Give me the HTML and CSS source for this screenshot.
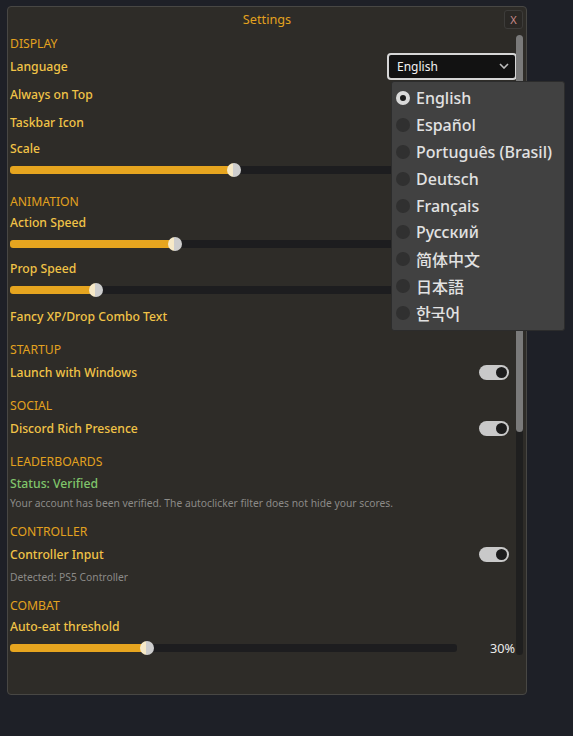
FILE: index.html
```html
<!doctype html>
<html lang="en">
<head>
  <meta charset="UTF-8">
  <title>Settings</title>
  <link rel="stylesheet" href="styles.css">
</head>
<body>
  <div class="window">
    <div class="titlebar">
      <span class="title">Settings</span>
      <div class="close">X</div>
    </div>

    <div class="panel">
      <div class="scroll">
        <section class="group">
          <div class="head">Display</div>
          <div class="opt">
            <span>Language</span>
            <div class="select">
              <span>English</span>
              <svg width="10" height="6" viewBox="0 0 10 6"><path d="M1 1l4 4 4-4" fill="none" stroke="#bdbdbd" stroke-width="1.6"/></svg>
            </div>
          </div>
          <div class="opt"><span>Always on Top</span><div class="toggle"></div></div>
          <div class="opt"><span>Taskbar Icon</span><div class="toggle"></div></div>
          <div class="label">Scale</div>
          <div class="slider">
            <div class="track"><div class="fill" style="width:50.1%"></div><div class="grab" style="left:50.1%"></div></div>
            <span class="value"></span>
          </div>
        </section>

        <section class="group">
          <div class="head">Animation</div>
          <div class="label">Action Speed</div>
          <div class="slider">
            <div class="track"><div class="fill" style="width:36.9%"></div><div class="grab" style="left:36.9%"></div></div>
            <span class="value"></span>
          </div>
          <div class="label">Prop Speed</div>
          <div class="slider">
            <div class="track"><div class="fill" style="width:19.2%"></div><div class="grab" style="left:19.2%"></div></div>
            <span class="value"></span>
          </div>
          <div class="opt"><span>Fancy XP/Drop Combo Text</span><div class="toggle"></div></div>
        </section>

        <section class="group">
          <div class="head">Startup</div>
          <div class="opt"><span>Launch with Windows</span><div class="toggle"></div></div>
        </section>

        <section class="group">
          <div class="head">Social</div>
          <div class="opt"><span>Discord Rich Presence</span><div class="toggle"></div></div>
        </section>

        <section class="group">
          <div class="head">Leaderboards</div>
          <div class="status">Status: Verified</div>
          <div class="note">Your account has been verified. The autoclicker filter does not hide your scores.</div>
        </section>

        <section class="group">
          <div class="head">Controller</div>
          <div class="opt"><span>Controller Input</span><div class="toggle"></div></div>
          <div class="note">Detected: PS5 Controller</div>
        </section>

        <section class="group">
          <div class="head">Combat</div>
          <div class="label">Auto-eat threshold</div>
          <div class="slider">
            <div class="track"><div class="fill" style="width:30.6%"></div><div class="grab" style="left:30.6%"></div></div>
            <span class="value">30%</span>
          </div>
        </section>
      </div>

      <div class="scrollbar"><div class="thumb"></div></div>
    </div>
  </div>

  <!-- language dropdown list, open -->
  <div class="popup">
    <div class="item"><i class="radio checked"></i>English</div>
    <div class="item"><i class="radio"></i>Español</div>
    <div class="item"><i class="radio"></i>Português (Brasil)</div>
    <div class="item"><i class="radio"></i>Deutsch</div>
    <div class="item"><i class="radio"></i>Français</div>
    <div class="item"><i class="radio"></i>Русский</div>
    <div class="item" lang="zh-CN"><i class="radio"></i>简体中文</div>
    <div class="item" lang="ja"><i class="radio"></i>日本語</div>
    <div class="item" lang="ko"><i class="radio"></i>한국어</div>
  </div>
</body>
</html>
```

FILE: styles.css
```css
:root {
  --page: #1e2027;
  --panel: #2e2c28;
  --orange: #e3a21f;
  --yellow: #f1c347;
  --muted: #8b8a87;
  --green: #80c56b;
  --fill: #e6a51f;
  --track: #1d1d1f;
}

* {
  box-sizing: border-box;
}

body {
  margin: 0;
  padding: 6px 0 0 7px;
  height: 736px;
  overflow: hidden;
  position: relative;
  background: var(--page);
  font-family: "Noto Sans", "Noto Sans CJK SC", sans-serif;
  font-size: 12.2px;
  font-weight: 500;
}

.window {
  width: 520px;
  height: 689px;
  background: var(--panel);
  border: 1px solid #484744;
  border-radius: 4px;
  display: flex;
  flex-direction: column;
}

.titlebar {
  height: 27px;
  padding-bottom: 3px;
  display: grid;
  grid-template-columns: 1fr auto 1fr;
  align-items: center;
}

.title {
  grid-column: 2;
  color: var(--orange);
  font-size: 12.7px;
  font-weight: 400;
}

.close {
  grid-column: 3;
  justify-self: end;
  width: 19px;
  height: 19px;
  margin-right: 3px;
  border: 1px solid #3d3c3a;
  border-radius: 3px;
  background: #2a2825;
  color: #c98b8b;
  font-size: 11px;
  font-weight: 400;
  display: flex;
  align-items: center;
  justify-content: center;
}

.panel {
  display: flex;
  height: 626px;
}

.scroll {
  flex: 1;
  padding-left: 2px;
  overflow: hidden;
}

.scrollbar {
  width: 7px;
  height: 620px;
  margin: 1px 3px 0 0;
  background: #1f1f1f;
  border-radius: 4px;
}

.thumb {
  height: 397px;
  background: #7a7a7a;
  border-radius: 4px;
}

.group + .group {
  margin-top: 10px;
}

.head {
  height: 18px;
  padding-top: 1px;
  line-height: 18px;
  color: var(--orange);
  font-weight: 400;
  text-transform: uppercase;
}

.opt {
  height: 28px;
  display: flex;
  align-items: center;
  justify-content: space-between;
  color: var(--yellow);
}

.label {
  height: 22px;
  padding-top: 2px;
  line-height: 22px;
  color: var(--yellow);
}

.status {
  height: 24px;
  padding-top: 2px;
  line-height: 24px;
  color: var(--green);
}

.note {
  height: 18px;
  line-height: 18px;
  font-size: 10.3px;
  font-weight: 400;
  color: var(--muted);
}

/* on/off switch */
.toggle {
  position: relative;
  width: 30px;
  height: 15px;
  margin-right: 7px;
  border-radius: 8px;
  background: #c9c9c9;
}

.toggle::after {
  content: "";
  position: absolute;
  right: 2px;
  top: 2px;
  width: 11px;
  height: 11px;
  border-radius: 50%;
  background: #1c1c1c;
}

/* sliders */
.slider {
  height: 24px;
  display: flex;
  align-items: center;
}

.track {
  position: relative;
  width: 447px;
  height: 8px;
  border-radius: 3px;
  background: var(--track);
}

.fill {
  height: 100%;
  border-radius: 3px 0 0 3px;
  background: var(--fill);
}

.grab {
  position: absolute;
  top: 50%;
  width: 14px;
  height: 14px;
  border-radius: 50%;
  transform: translate(-50%, -50%);
  background: linear-gradient(90deg, #f6e9c7 0 45%, #cdcdcd 45%);
}

.value {
  flex: 1;
  text-align: right;
  padding-right: 1px;
  font-size: 12.7px;
  font-weight: 400;
  color: #ebebeb;
}

/* language select */
.select {
  width: 130px;
  height: 27px;
  margin-right: -1px;
  padding: 0 6px 0 8px;
  border: 2px solid #d6d6d6;
  border-radius: 4px;
  background: #121212;
  color: #f2f2f2;
  font-size: 12px;
  font-weight: 400;
  display: flex;
  align-items: center;
  justify-content: space-between;
}

.popup {
  position: absolute;
  left: 391px;
  top: 81px;
  width: 174px;
  padding: 3px 0 4px 4px;
  background: #414141;
  border: 1px solid #2c2c2c;
  border-radius: 3px;
}

.item {
  height: 26.8px;
  display: flex;
  align-items: center;
  gap: 6px;
  font-size: 16px;
  color: #e2e2e2;
}

.item:lang(zh-CN) { font-family: "Noto Sans CJK SC", sans-serif; }
.item:lang(ja) { font-family: "Noto Sans CJK JP", sans-serif; }
.item:lang(ko) { font-family: "Noto Sans CJK KR", sans-serif; }

.radio {
  width: 14px;
  height: 14px;
  border-radius: 50%;
  background: #303030;
  flex-shrink: 0;
}

.radio.checked {
  background: #1a1a1a;
  border: 4px solid #d9d9d9;
}
```
